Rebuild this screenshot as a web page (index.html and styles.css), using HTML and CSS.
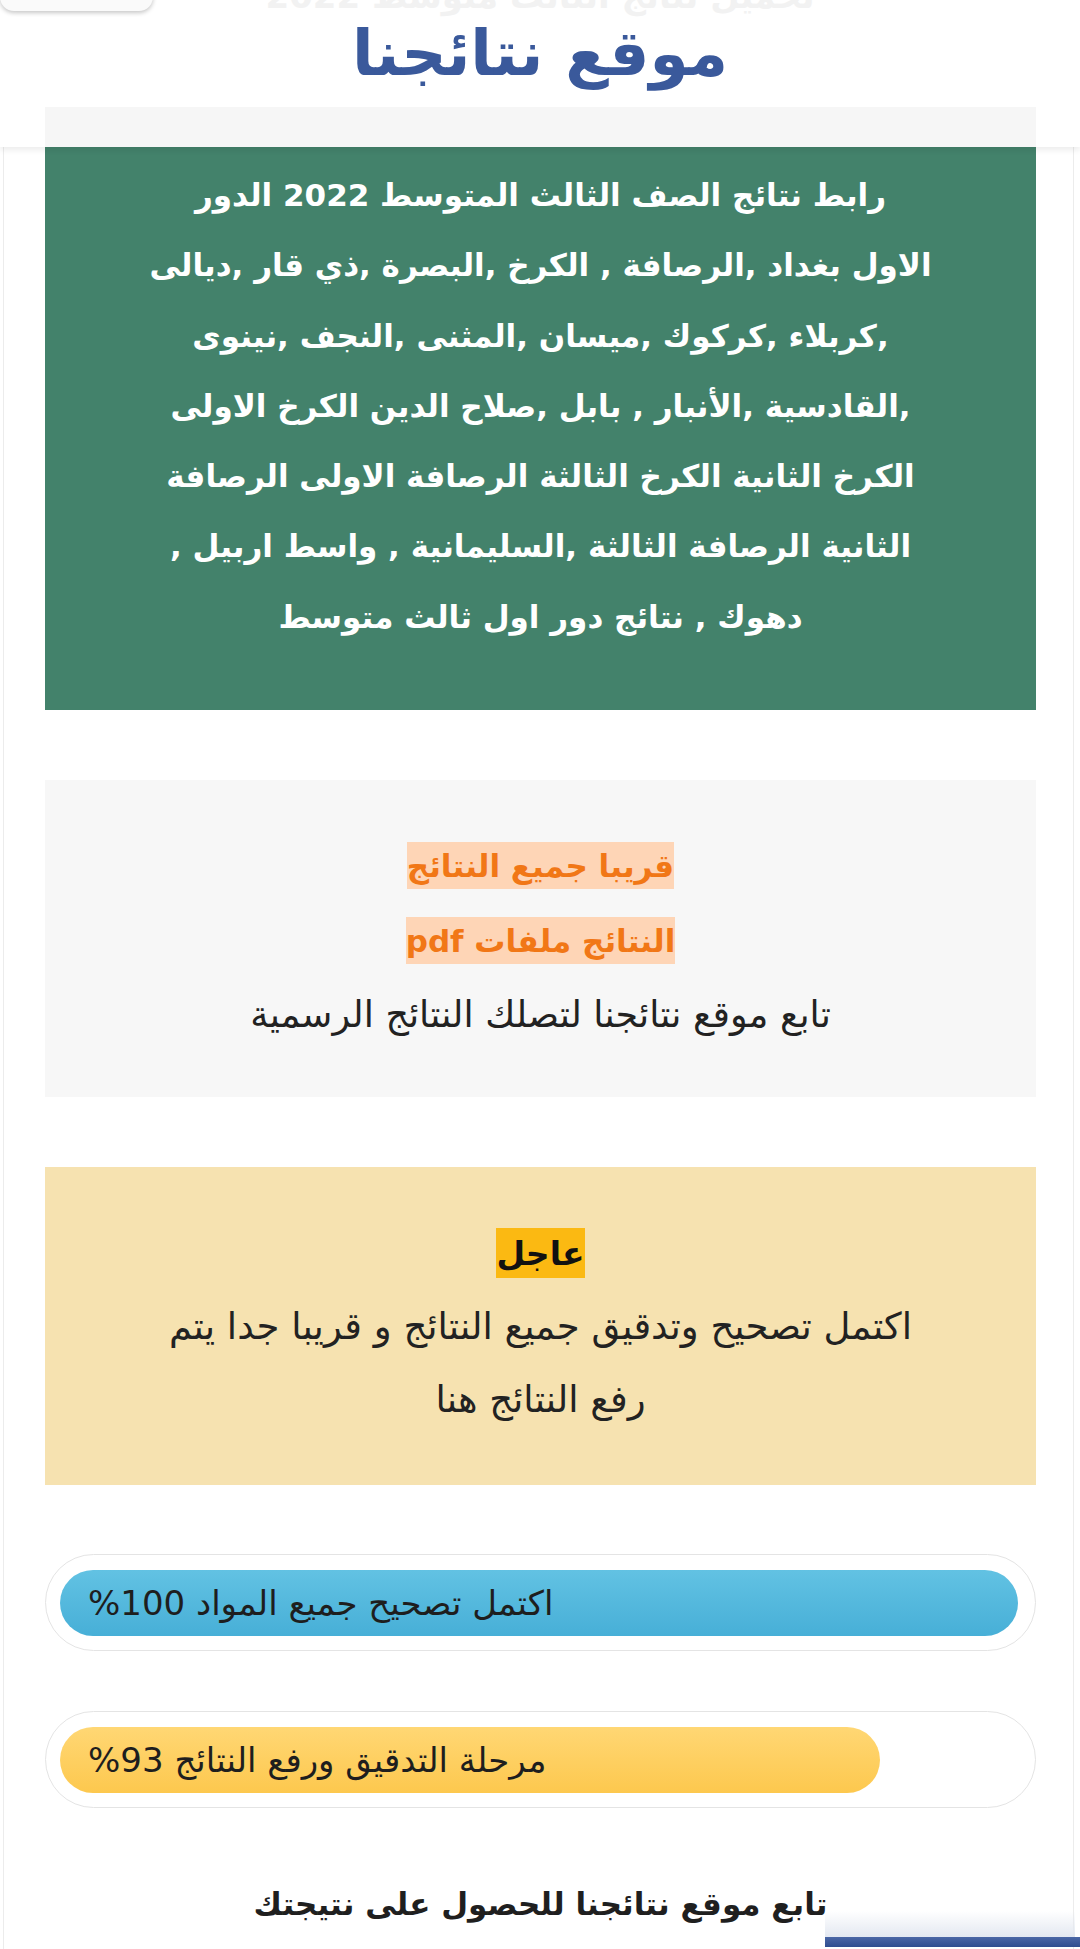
FILE: index.html
```html
<!DOCTYPE html>
<html lang="ar" dir="rtl">
<head>
<meta charset="utf-8">
<title>موقع نتائجنا</title>
<link rel="stylesheet" href="styles.css">
</head>
<body>
<div class="page">
  <header class="site-header">
    <div class="top-btn"></div>
    <div class="ghost">تحميل نتائج الثالث متوسط 2022</div>
    <h1 class="site-title">موقع نتائجنا</h1>
    <div class="strip"></div>
  </header>

  <main class="content">
    <section class="card card-green">
      <p>رابط نتائج الصف الثالث المتوسط 2022 الدور<br>الاول بغداد ,الرصافة , الكرخ ,البصرة ,ذي قار ,ديالى<br>,كربلاء ,كركوك ,ميسان ,المثنى ,النجف ,نينوى<br>,القادسية ,الأنبار , بابل ,صلاح الدين الكرخ الاولى<br>الكرخ الثانية الكرخ الثالثة الرصافة الاولى الرصافة<br>الثانية الرصافة الثالثة ,السليمانية , واسط اربيل ,<br>دهوك , نتائج دور اول ثالث متوسط</p>
    </section>

    <section class="card card-gray">
      <p><span class="hl-orange">قريبا جميع النتائج</span><br><span class="hl-orange">النتائج ملفات pdf</span><br>تابع موقع نتائجنا لتصلك النتائج الرسمية</p>
    </section>

    <section class="card card-yellow">
      <p><span class="hl-amber">عاجل</span><br>اكتمل تصحيح وتدقيق جميع النتائج و قريبا جدا يتم<br>رفع النتائج هنا</p>
    </section>

    <div class="track">
      <div class="bar bar-blue" style="width:100%">اكتمل تصحيح جميع المواد 100%</div>
    </div>

    <div class="track track-second">
      <div class="bar bar-yellow" style="width:85.6%">مرحلة التدقيق ورفع النتائج 93%</div>
    </div>

    <p class="follow">تابع موقع نتائجنا للحصول على نتيجتك</p>
  </main>
</div>
<div class="bottom-shade"></div>
<div class="bottom-tab"></div>
</body>
</html>
```

FILE: styles.css
```css
html, body {
  margin: 0;
  padding: 0;
  background: #ffffff;
}

body {
  font-family: "DejaVu Sans", sans-serif;
  color: #222222;
  height: 1949px;
  overflow: hidden;
  position: relative;
}

.page {
  margin: 0 6px 0 3px;
  border-left: 1px solid #ececec;
  border-right: 1px solid #ececec;
  min-height: 1949px;
  box-sizing: border-box;
}

.site-header {
  position: relative;
  display: flex;
  flex-direction: column;
  height: 147px;
  background: #ffffff;
  box-shadow: 0 3px 6px rgba(0, 0, 0, 0.08);
  z-index: 2;
  margin: 0 -7px 0 -4px;
}

.top-btn {
  position: absolute;
  left: 0;
  top: -30px;
  width: 153px;
  height: 41px;
  background: #fafafa;
  border-radius: 0 0 14px 14px;
  box-shadow: 0 2px 4px rgba(0, 0, 0, 0.22);
}

.ghost {
  margin-top: -24px;
  height: 40px;
  flex: none;
  line-height: 40px;
  text-align: center;
  font-size: 34px;
  font-weight: bold;
  color: #f2f2f2;
  white-space: nowrap;
}

.site-title {
  margin: 0;
  flex: none;
  height: 91px;
  line-height: 76px;
  text-align: center;
  font-size: 63px;
  font-weight: bold;
  color: #3a599b;
}

.strip {
  flex: none;
  height: 40px;
  margin: 0 44px 0 45px;
  background: #f6f6f6;
}

.content {
  padding: 0 37px 0 41px;
}

.card {
  text-align: center;
}

.card p {
  margin: 0;
}

.card-green {
  background: #43826b;
  color: #ffffff;
  font-weight: bold;
  font-size: 31px;
  line-height: 70.3px;
  padding: 13px 0 58px;
}

.card-gray {
  margin-top: 70px;
  background: #f7f7f7;
  font-size: 36.5px;
  line-height: 73px;
  padding: 48px 0 46px;
}

.hl-orange {
  background: #fed5b6;
  color: #f17716;
  font-weight: bold;
  font-size: 31px;
  padding: 6px 0 5px;
}

.card-yellow {
  margin-top: 70px;
  background: #f6e2b0;
  font-size: 37px;
  line-height: 73px;
  padding: 49px 0 49px;
}

.hl-amber {
  background: #fbb912;
  color: #111111;
  font-weight: bold;
  font-size: 33px;
  padding: 6px 0 5px;
}

.track {
  margin-top: 69px;
  height: 97px;
  box-sizing: border-box;
  border: 1px solid #e4e4e4;
  border-radius: 49px;
  padding: 15px 17px 15px 14px;
  display: flex;
  justify-content: flex-end;
  background: #ffffff;
}

.track-second {
  margin-top: 60px;
}

.bar {
  height: 66px;
  border-radius: 33px;
  box-sizing: border-box;
  padding-left: 28px;
  font-size: 34px;
  line-height: 66px;
  text-align: left;
  color: #1e1e1e;
  white-space: nowrap;
}

.bar-blue {
  background: linear-gradient(#62c2e3, #47afd7);
}

.bar-yellow {
  background: linear-gradient(#ffd774, #fdc84e);
}

.follow {
  margin: 66px 0 0;
  text-align: center;
  font-size: 31px;
  font-weight: bold;
  line-height: 60px;
  color: #1f1f1f;
}

.bottom-shade {
  position: absolute;
  right: 5px;
  bottom: 12px;
  width: 250px;
  height: 26px;
  background: linear-gradient(rgba(228, 233, 242, 0), #e3e8f1);
}

.bottom-tab {
  position: absolute;
  right: 0;
  bottom: 2px;
  width: 255px;
  height: 10px;
  background: linear-gradient(#4b67a6, #2f4d8f);
}
```
